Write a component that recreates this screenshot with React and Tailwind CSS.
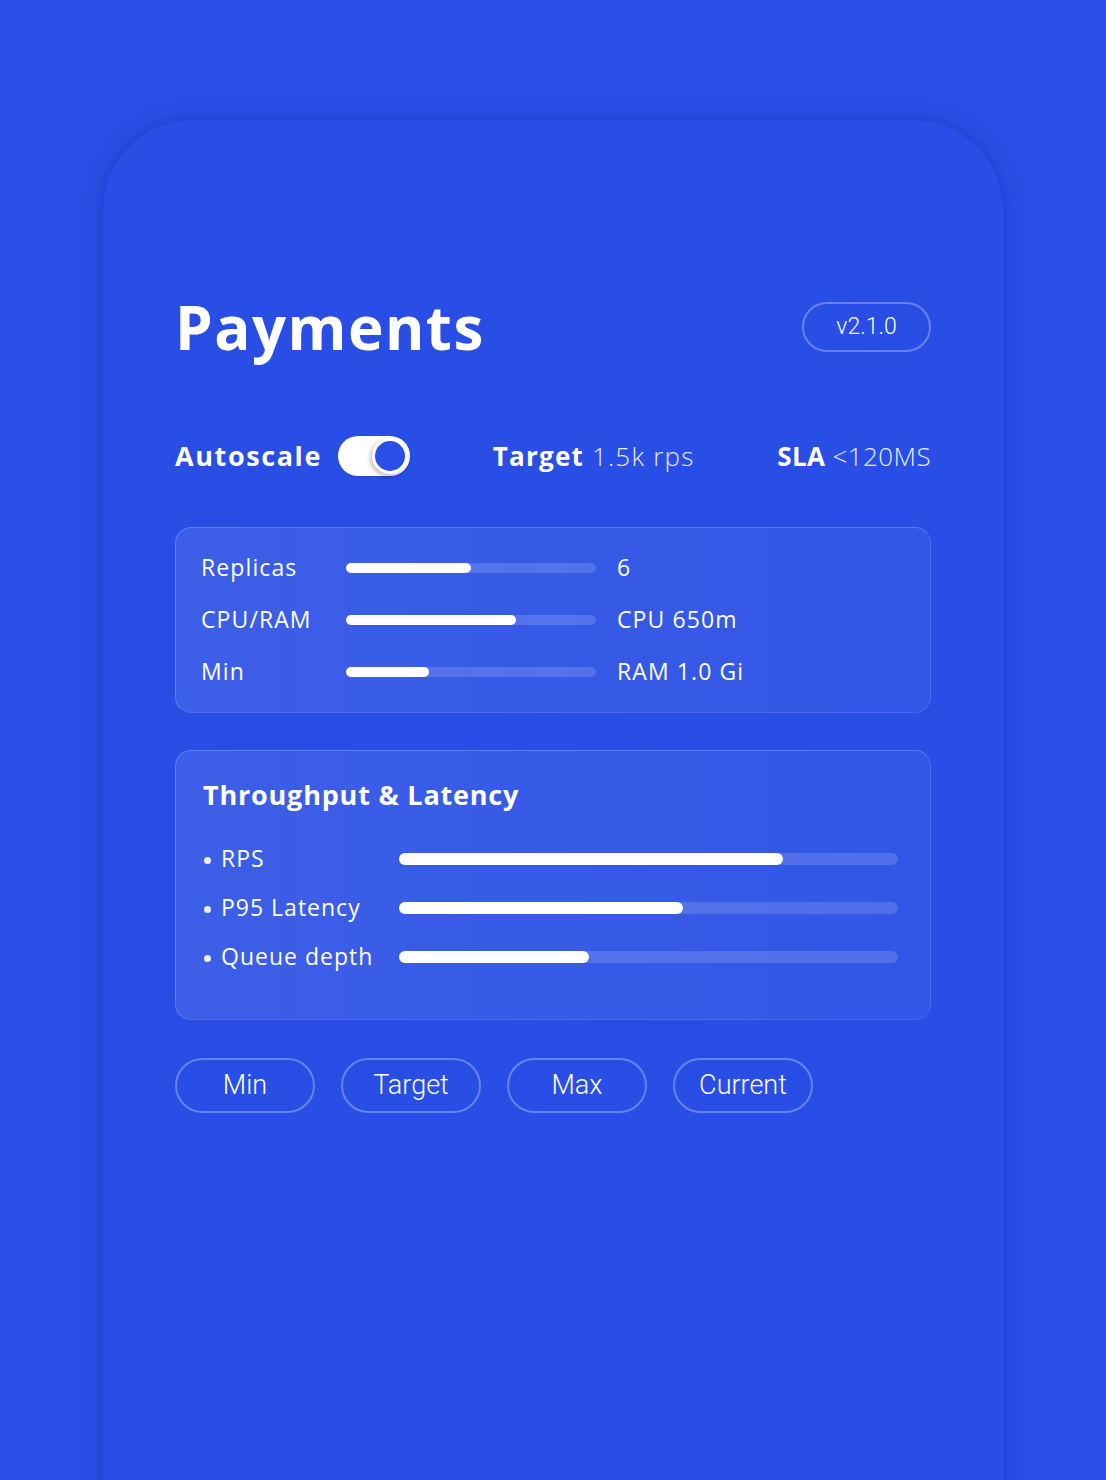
import React from 'react'

const sans = { fontFamily: '"Open Sans", "Noto Sans", sans-serif' }
const thin = { fontFamily: 'Roboto, "Open Sans", sans-serif' }

const resources = [
  { label: 'Replicas', pct: 50, value: '6' },
  { label: 'CPU/RAM', pct: 68, value: 'CPU 650m' },
  { label: 'Min', pct: 33, value: 'RAM 1.0 Gi' },
]

const metrics = [
  { label: 'RPS', pct: 77 },
  { label: 'P95 Latency', pct: 57 },
  { label: 'Queue depth', pct: 38 },
]

function Bar({ pct, h = 'h-[10px]' }) {
  return (
    <div className={`relative w-full rounded-full bg-white/15 ${h}`}>
      <div className={`rounded-full bg-white ${h}`} style={{ width: `${pct}%` }} />
    </div>
  )
}

export default function App() {
  return (
    <div className="min-h-[1480px] w-full overflow-hidden bg-[#2a4fe6] pt-[120px]" style={sans}>
      <div className="mx-auto h-[1400px] w-[900px] rounded-t-[90px] bg-[#284ee5] px-[72px] pt-[177px] shadow-[0_0_18px_rgba(20,40,150,0.45)]">
        {/* Header */}
        <div className="flex items-center justify-between">
          <h1 className="text-[60px] font-bold leading-none tracking-[1.5px] text-white">Payments</h1>
          <span
            className="flex h-[50px] w-[129px] items-center justify-center rounded-full border-2 border-white/30 text-[23px] font-light text-white"
            style={thin}
          >
            v2.1.0
          </span>
        </div>

        {/* Controls */}
        <div className="mt-[79px] flex items-center justify-between text-[26px] tracking-[1.2px] text-white">
          <div className="flex items-center gap-4">
            <span className="text-[27px] font-bold tracking-[1.6px]">Autoscale</span>
            <div className="flex h-[40px] w-[72px] items-center justify-end rounded-full bg-white px-[2px] shadow-sm">
              <div className="h-[36px] w-[36px] rounded-full border-[3px] border-white bg-[#2a4fe6] shadow-[-2px_2px_4px_rgba(0,0,0,0.25)]" />
            </div>
          </div>
          <div>
            <span className="font-bold">Target</span>{' '}
            <span className="font-light text-white/90">1.5k rps</span>
          </div>
          <div className="tracking-[0.4px]">
            <span className="font-bold">SLA</span>{' '}
            <span className="font-light text-white/90">&lt;120MS</span>
          </div>
        </div>

        {/* Resources */}
        <div className="mt-[50px] rounded-[16px] border border-white/10 border-l-[#5aa0ff]/60 border-t-[#5aa0ff]/60 bg-gradient-to-r from-white/10 to-white/5 px-[25px] py-[22px]">
          <div className="flex flex-col gap-[16px]">
            {resources.map((r) => (
              <div key={r.label} className="flex h-[36px] items-center text-[23px] font-medium tracking-[1.1px] text-white">
                <span className="w-[145px]">{r.label}</span>
                <div className="w-[250px]">
                  <Bar pct={r.pct} />
                </div>
                <span className="ml-[21px]">{r.value}</span>
              </div>
            ))}
          </div>
        </div>

        {/* Throughput */}
        <div className="mt-[37px] rounded-[16px] border border-white/10 border-l-[#5aa0ff]/60 border-t-[#5aa0ff]/60 bg-gradient-to-r from-white/10 to-white/5 pb-[44px] pl-[27px] pr-[32px] pt-[26px]">
          <h2 className="text-[27px] font-bold leading-[36px] tracking-[0.8px] text-white">Throughput &amp; Latency</h2>
          <div className="mt-[28px] flex flex-col gap-[13px]">
            {metrics.map((m) => (
              <div key={m.label} className="flex h-[36px] items-center text-[23px] font-medium tracking-[1px] text-white">
                <span className="w-[196px] pl-[1px]">
                  <span className="mr-[10px] inline-block h-[7px] w-[7px] -translate-y-[3px] rounded-full bg-white/90" />
                  {m.label}
                </span>
                <div className="flex-1">
                  <Bar pct={m.pct} h="h-[12px]" />
                </div>
              </div>
            ))}
          </div>
        </div>

        {/* Pills */}
        <div className="mt-[38px] flex gap-[26px]" style={thin}>
          {['Min', 'Target', 'Max', 'Current'].map((p) => (
            <span
              key={p}
              className="flex h-[55px] w-[140px] items-center justify-center rounded-full border-2 border-white/30 text-[27px] font-light text-white"
            >
              {p}
            </span>
          ))}
        </div>
      </div>
    </div>
  )
}
